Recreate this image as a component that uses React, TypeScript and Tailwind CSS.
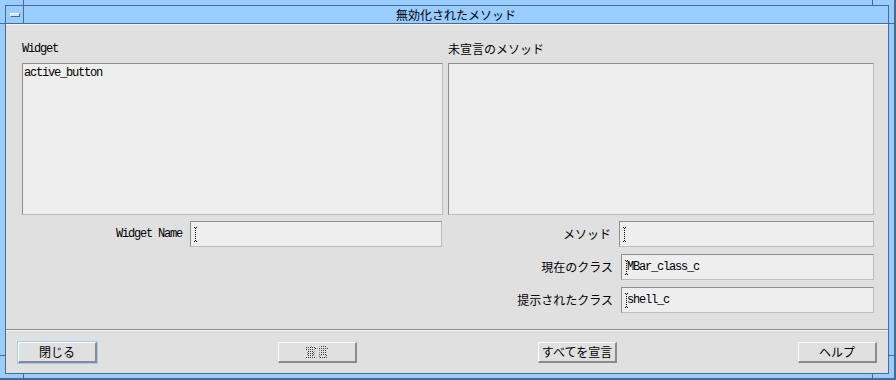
import React from 'react';

const mono =
  "font-['Liberation_Mono',monospace] text-[12px] tracking-[-1.2px] leading-[14px] text-black";
const jp = "font-['Noto_Sans_CJK_JP',sans-serif] text-[12px] leading-[14px] text-black";
const sunken =
  'border border-t-[#8e8e8e] border-l-[#8e8e8e] border-b-[#bdbdbd] border-r-[#bdbdbd] bg-[#eeeeee]';
const frame = 'bg-[#4a6b8c]';

const IBeam: React.FC = () => (
  <svg width="3" height="15" viewBox="0 0 3 15" className="shrink-0">
    {[
      [0, 0], [2, 0], [1, 1], [1, 3], [1, 5], [1, 7], [1, 9], [1, 11], [1, 13], [0, 14], [2, 14],
    ].map(([x, y]) => (
      <rect key={`${x}-${y}`} x={x} y={y} width="1" height="1" fill="#000" />
    ))}
  </svg>
);

const Field: React.FC<{ width: string; value?: string }> = ({ width, value }) => (
  <div className={`${sunken} ${width} h-[26px] flex items-center pl-[3px]`}>
    <IBeam />
    {value && <span className={`${mono} -ml-[1px]`}>{value}</span>}
  </div>
);

const Button: React.FC<{ label: string; focused?: boolean; disabled?: boolean }> = ({
  label,
  focused,
  disabled,
}) => (
  <button
    className={`w-[79px] h-[21px] flex items-center justify-center bg-[#e0e0e0] border-t border-l border-t-white border-l-white border-b-2 border-r-2 border-b-[#8a8a8a] border-r-[#8a8a8a] ${
      focused ? 'outline outline-1 outline-[#99ccff]' : ''
    }`}
  >
    {disabled ? (
      <span
        className={`${jp} text-transparent bg-clip-text bg-[repeating-conic-gradient(#000_0_25%,transparent_0_50%)] bg-[length:2px_2px]`}
      >
        宣言
      </span>
    ) : (
      <span className={jp}>{label}</span>
    )}
  </button>
);

export default function App() {
  return (
    <div className="relative w-[896px] h-[380px] bg-[#99ccff] border-r-2 border-b-2 border-[#4a6b8c] pt-[5px] pl-[5px] pr-[5px] pb-[4px] flex">
      {/* frame resize ticks */}
      <div className={`absolute left-[23px] top-0 w-px h-[5px] ${frame}`} />
      <div className={`absolute left-0 top-[23px] w-[5px] h-px ${frame}`} />
      <div className={`absolute left-[872px] top-0 w-px h-[5px] ${frame}`} />
      <div className={`absolute left-[889px] top-[23px] w-[5px] h-px ${frame}`} />
      <div className={`absolute left-[23px] top-[374px] w-px h-[4px] ${frame}`} />
      <div className={`absolute left-0 top-[355px] w-[5px] h-px ${frame}`} />
      <div className={`absolute left-[872px] top-[374px] w-px h-[4px] ${frame}`} />
      <div className={`absolute left-[889px] top-[355px] w-[5px] h-px ${frame}`} />

      <div className="flex-1 flex flex-col border border-[#4a6b8c]">
        {/* title bar */}
        <div className="h-[18px] flex border-b border-[#4a6b8c] bg-[#99ccff]">
          <div className="w-[18px] border-r border-[#4a6b8c] flex items-center justify-center">
            <div className="w-[10px] h-[4px] bg-[#cce6ff] border-t border-l border-t-white border-l-white border-b border-r border-b-[#4a6b8c] border-r-[#4a6b8c]" />
          </div>
          <div className={`flex-1 flex items-center justify-center ${jp}`}>無効化されたメソッド</div>
        </div>

        {/* body */}
        <div className="flex-1 flex flex-col bg-[#e0e0e0] border-t border-t-[#f4f4f4]">
          <div className="grid grid-cols-[421px_426px] gap-x-[5px] pl-[16px] pr-[14px] pt-[17px]">
            <div className="flex flex-col">
              <div className={`h-[14px] mb-[7px] flex items-center ${mono}`}>Widget</div>
              <div className={`${sunken} h-[152px] pl-[1px] pt-[2px]`}>
                <div className={mono}>active_button</div>
              </div>
              <div className="mt-[6px] flex items-center">
                <div className={`flex-1 text-right pr-[8px] ${mono}`}>Widget Name</div>
                <Field width="w-[252px]" />
                <div className="w-px" />
              </div>
            </div>

            <div className="flex flex-col">
              <div className={`h-[14px] mb-[7px] flex items-center ${jp}`}>未宣言のメソッド</div>
              <div className={`${sunken} h-[152px]`} />
              <div className="mt-[6px] flex flex-col gap-[7px]">
                <div className="flex items-center">
                  <div className={`flex-1 text-right pr-[8px] ${jp}`}>メソッド</div>
                  <Field width="w-[255px]" />
                </div>
                <div className="flex items-center">
                  <div className={`flex-1 text-right pr-[8px] ${jp}`}>現在のクラス</div>
                  <Field width="w-[253px]" value="MBar_class_c" />
                </div>
                <div className="flex items-center">
                  <div className={`flex-1 text-right pr-[8px] ${jp}`}>提示されたクラス</div>
                  <Field width="w-[253px]" value="shell_c" />
                </div>
              </div>
            </div>
          </div>

          <div className="mt-[16px] border-t border-t-[#8a8a8a] border-b border-b-[#f8f8f8]" />

          <div className="mt-[11px] pl-[12px] pr-[11px] flex justify-between">
            <Button label="閉じる" focused />
            <Button label="宣言" disabled />
            <Button label="すべてを宣言" />
            <Button label="ヘルプ" />
          </div>
        </div>
      </div>
    </div>
  );
}
